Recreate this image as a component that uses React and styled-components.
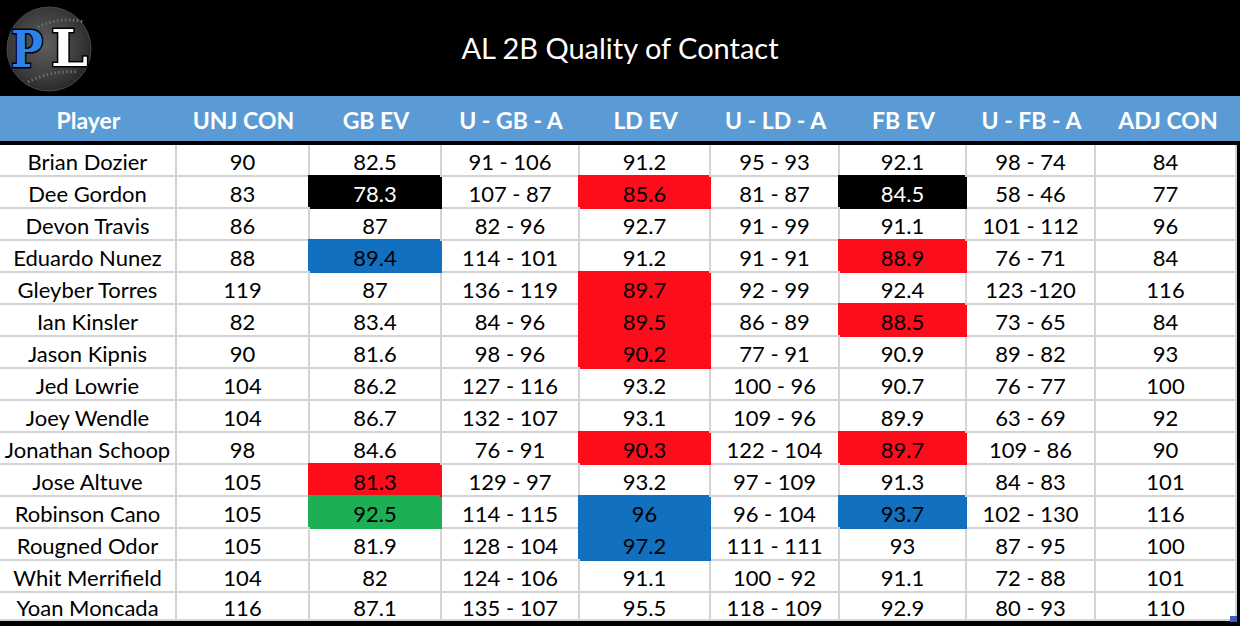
import styled, { createGlobalStyle } from 'styled-components';

const COLS = ['Player', 'UNJ CON', 'GB EV', 'U - GB - A', 'LD EV', 'U - LD - A', 'FB EV', 'U - FB - A', 'ADJ CON'];

const FILL = {
  black: '#000000',
  red: '#fd0d1c',
  blue: '#1170bf',
  green: '#1caf54',
};

// [name, ...values], then which columns are shaded
const ROWS = [
  [['Brian Dozier', '90', '82.5', '91 - 106', '91.2', '95 - 93', '92.1', '98 - 74', '84'], {}],
  [['Dee Gordon', '83', '78.3', '107 - 87', '85.6', '81 - 87', '84.5', '58 - 46', '77'], { 2: 'black', 4: 'red', 6: 'black' }],
  [['Devon Travis', '86', '87', '82 - 96', '92.7', '91 - 99', '91.1', '101 - 112', '96'], {}],
  [['Eduardo Nunez', '88', '89.4', '114 - 101', '91.2', '91 - 91', '88.9', '76 - 71', '84'], { 2: 'blue', 6: 'red' }],
  [['Gleyber Torres', '119', '87', '136 - 119', '89.7', '92 - 99', '92.4', '123 -120', '116'], { 4: 'red' }],
  [['Ian Kinsler', '82', '83.4', '84 - 96', '89.5', '86 - 89', '88.5', '73 - 65', '84'], { 4: 'red', 6: 'red' }],
  [['Jason Kipnis', '90', '81.6', '98 - 96', '90.2', '77 - 91', '90.9', '89 - 82', '93'], { 4: 'red' }],
  [['Jed Lowrie', '104', '86.2', '127 - 116', '93.2', '100 - 96', '90.7', '76 - 77', '100'], {}],
  [['Joey Wendle', '104', '86.7', '132 - 107', '93.1', '109 - 96', '89.9', '63 - 69', '92'], {}],
  [['Jonathan Schoop', '98', '84.6', '76 - 91', '90.3', '122 - 104', '89.7', '109 - 86', '90'], { 4: 'red', 6: 'red' }],
  [['Jose Altuve', '105', '81.3', '129 - 97', '93.2', '97 - 109', '91.3', '84 - 83', '101'], { 2: 'red' }],
  [['Robinson Cano', '105', '92.5', '114 - 115', '96', '96 - 104', '93.7', '102 - 130', '116'], { 2: 'green', 4: 'blue', 6: 'blue' }],
  [['Rougned Odor', '105', '81.9', '128 - 104', '97.2', '111 - 111', '93', '87 - 95', '100'], { 4: 'blue' }],
  [['Whit Merrifield', '104', '82', '124 - 106', '91.1', '100 - 92', '91.1', '72 - 88', '101'], {}],
  [['Yoan Moncada', '116', '87.1', '135 - 107', '95.5', '118 - 109', '92.9', '80 - 93', '110'], {}],
];

const TRACKS = '177px 133px 132px 138px 131px 129px 127px 129px 1fr';

const Logo = () => (
  <svg width="98" height="96" viewBox="0 0 98 96">
    <defs>
      <radialGradient id="ball" cx="45%" cy="45%" r="60%">
        <stop offset="0%" stopColor="#5e5e5e" />
        <stop offset="70%" stopColor="#3a3a3a" />
        <stop offset="100%" stopColor="#242424" />
      </radialGradient>
    </defs>
    <circle cx="49" cy="49" r="42" fill="url(#ball)" stroke="#4a4a4a" strokeWidth="1" />
    <path d="M38 27 Q60 16 84 22" fill="none" stroke="#6c6c6c" strokeWidth="3" strokeDasharray="1.5 2.5" />
    <path d="M28 82 Q52 70 78 72" fill="none" stroke="#6c6c6c" strokeWidth="3" strokeDasharray="1.5 2.5" />
    <text
      x="11"
      y="67"
      textLength="32"
      lengthAdjust="spacingAndGlyphs"
      fontFamily="'DejaVu Serif', serif"
      fontWeight="bold"
      fontSize="51"
      fill="#2f80e8"
      stroke="#000"
      strokeWidth="3"
      paintOrder="stroke"
    >
      P
    </text>
    <text
      x="51"
      y="66"
      textLength="37"
      lengthAdjust="spacingAndGlyphs"
      fontFamily="'DejaVu Serif', serif"
      fontWeight="bold"
      fontSize="51"
      fill="#ffffff"
      stroke="#000"
      strokeWidth="3"
      paintOrder="stroke"
    >
      L
    </text>
  </svg>
);

const App = () => (
  <>
    <GlobalStyle />
    <Page>
      <Banner>
        <LogoSlot>
          <Logo />
        </LogoSlot>
        <Title>AL 2B Quality of Contact</Title>
      </Banner>

      <HeadRow>
        {COLS.map((c) => (
          <HeadCell key={c}>{c}</HeadCell>
        ))}
      </HeadRow>

      <Body>
        {ROWS.map(([cells, shade]) =>
          cells.map((v, i) => (
            <Cell key={cells[0] + i} $fill={shade[i]}>
              {v}
            </Cell>
          ))
        )}
      </Body>
      <Handle />
    </Page>
  </>
);

const GlobalStyle = createGlobalStyle`
  html, body {
    margin: 0;
    padding: 0;
    background: #000;
  }
`;

const Page = styled.div`
  position: relative;
  width: 1240px;
  height: 626px;
  overflow: hidden;
  background: #000;
  font-family: Lato, 'Open Sans', sans-serif;
`;

const Banner = styled.div`
  display: grid;
  grid-template-columns: 98px 1fr 98px;
  align-items: center;
  height: 96px;
`;

const LogoSlot = styled.div`
  display: flex;
  height: 96px;
`;

const Title = styled.h1`
  margin: 0;
  padding-bottom: 2px;
  color: #fff;
  font-weight: 400;
  font-size: 29px;
  text-align: center;
`;

const HeadRow = styled.div`
  display: grid;
  grid-template-columns: ${TRACKS};
  height: 45px;
  background: #5b9bd5;
  border-bottom: 4px solid #000;
`;

const HeadCell = styled.div`
  display: flex;
  align-items: center;
  justify-content: center;
  padding-top: 3px;
  color: #fff;
  font-weight: 700;
  font-size: 23px;
  white-space: nowrap;
`;

const Body = styled.div`
  display: grid;
  grid-template-columns: ${TRACKS};
  grid-template-rows: repeat(14, 32px) 28px;
  width: 1237px;
  background: #fff;
  border-bottom: 5px solid #000;
`;

const Cell = styled.div`
  display: flex;
  align-items: center;
  justify-content: center;
  padding-top: 2px;
  border-right: 2px solid ${(p) => (p.$fill ? FILL[p.$fill] : '#d4d4d4')};
  border-bottom: 2px solid ${(p) => (p.$fill ? FILL[p.$fill] : '#d4d4d4')};
  background: ${(p) => (p.$fill ? FILL[p.$fill] : '#fff')};
  box-shadow: ${(p) => (p.$fill ? `-2px -2px 0 0 ${FILL[p.$fill]}` : 'none')};
  color: ${(p) => (p.$fill === 'black' ? '#fff' : '#000')};
  font-size: 22px;
  white-space: nowrap;
`;

const Handle = styled.div`
  position: absolute;
  right: 3px;
  bottom: 4px;
  width: 7px;
  height: 6px;
  background: #3f5fc0;
`;

export default App;
